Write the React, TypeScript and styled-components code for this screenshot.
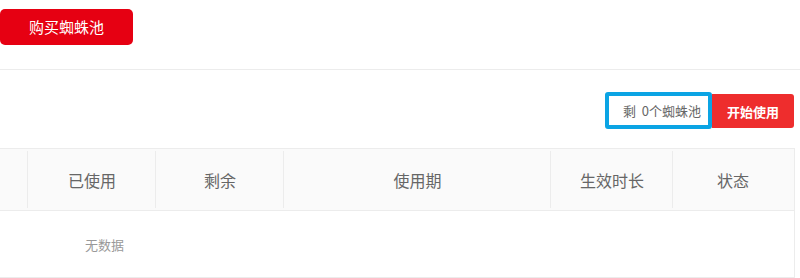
import styled, { createGlobalStyle } from 'styled-components'

const GlobalStyle = createGlobalStyle`
  html, body {
    margin: 0;
    padding: 0;
    background: #fff;
    font-family: "Noto Sans CJK SC", "Noto Sans", sans-serif;
  }
`

const Page = styled.div`
  width: 800px;
  height: 278px;
  overflow: hidden;
`

const TopBar = styled.div`
  padding-top: 9px;
  height: 70px;
  box-sizing: border-box;
  border-bottom: 1px solid #ececec;
`

const BuyButton = styled.button`
  width: 133px;
  height: 36px;
  border: none;
  border-radius: 5px;
  background: #e60012;
  color: #fff;
  font-family: inherit;
  font-size: 15px;
  padding: 0;
  line-height: 36px;
`

const ActionRow = styled.div`
  display: flex;
  justify-content: flex-end;
  align-items: flex-start;
  padding: 22px 6px 0 0;
  height: 78px;
  box-sizing: border-box;
`

const Remain = styled.div`
  box-sizing: border-box;
  height: 37px;
  padding: 0 7px 0 14px;
  border: 4px solid #0ba4e4;
  border-radius: 3px;
  display: flex;
  align-items: center;
  font-size: 13px;
  color: #666;
  white-space: pre;
`

const StartButton = styled.button`
  margin-top: 2px;
  height: 34px;
  border: none;
  border-radius: 0 3px 3px 0;
  background: #ee2d2d;
  color: #fff;
  font-family: inherit;
  font-size: 13px;
  font-weight: bold;
  padding: 0 15px;
`

const Table = styled.div`
  width: 794px;
  border-top: 1px solid #ececec;
  border-right: 1px solid #ececec;
`

const HeadRow = styled.div`
  display: grid;
  grid-template-columns: 28px 128px 128px 267px 122px 120px;
  height: 61px;
  background: #fafafa;
  border-bottom: 1px solid #ececec;
`

const HeadCell = styled.div<{ $last?: boolean }>`
  display: flex;
  align-items: center;
  justify-content: center;
  font-size: 16px;
  color: #666;
  position: relative;
  &::after {
    content: '';
    display: ${(p) => (p.$last ? 'none' : 'block')};
    position: absolute;
    right: 0;
    top: 2px;
    bottom: 2px;
    width: 1px;
    background: #ececec;
  }
`

const EmptyRow = styled.div`
  height: 66px;
  border-bottom: 1px solid #ececec;
  display: flex;
  align-items: center;
  padding-left: 85px;
  font-size: 13px;
  color: #999;
`

const columns = ['', '已使用', '剩余', '使用期', '生效时长', '状态']

export default function App() {
  return (
    <Page>
      <GlobalStyle />
      <TopBar>
        <BuyButton>购买蜘蛛池</BuyButton>
      </TopBar>
      <ActionRow>
        <Remain>剩  0个蜘蛛池</Remain>
        <StartButton>开始使用</StartButton>
      </ActionRow>
      <Table>
        <HeadRow>
          {columns.map((c, i) => (
            <HeadCell key={i} $last={i === columns.length - 1}>
              {c}
            </HeadCell>
          ))}
        </HeadRow>
        <EmptyRow>无数据</EmptyRow>
      </Table>
    </Page>
  )
}
